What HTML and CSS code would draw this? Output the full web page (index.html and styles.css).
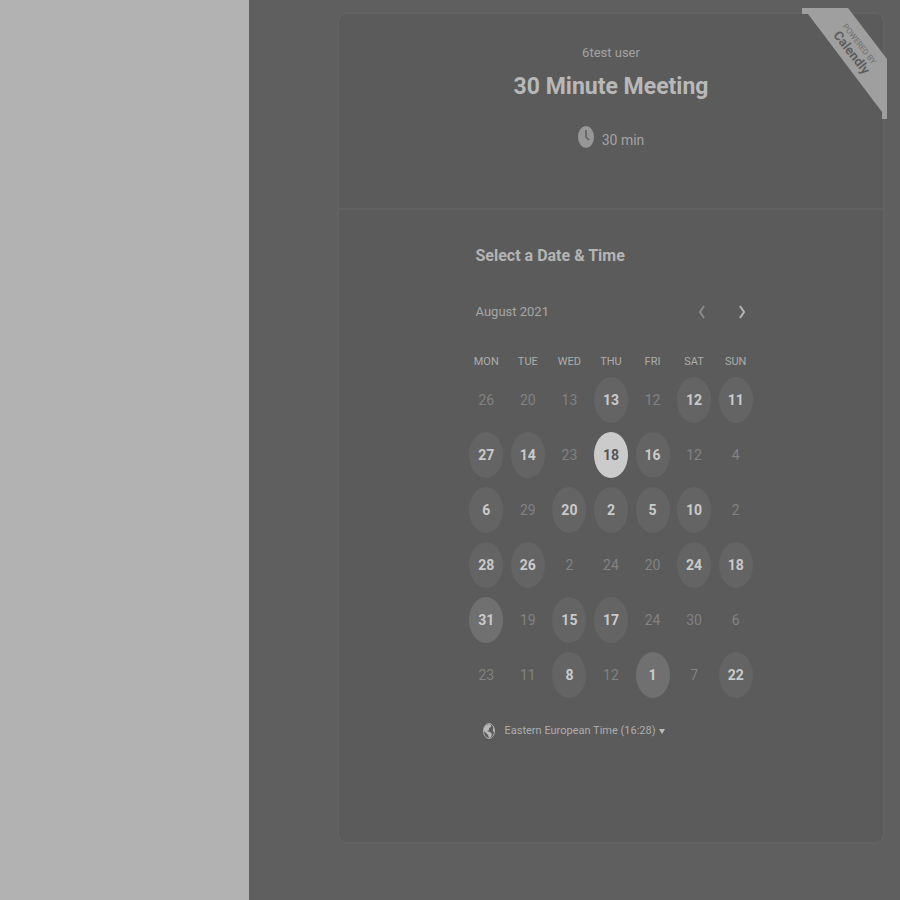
FILE: index.html
```
<!DOCTYPE html>
<html lang="en">
<head>
<meta charset="utf-8">
<title>30 Minute Meeting</title>
<link rel="stylesheet" href="styles.css">
</head>
<body>
<div class="page">
  <aside class="side"></aside>
  <main class="main">
    <section class="card">
      <a class="ribbon" href="#" aria-label="Powered by Calendly">
        <svg width="85" height="111" viewBox="0 0 85 111">
          <path class="ribbon-band" d="M0 0H46L85 51V111H80V104L6 6H0Z"/>
          <g transform="translate(57 35) rotate(52)">
            <text class="ribbon-small" x="1" y="3" text-anchor="middle">POWERED BY</text>
            <text class="ribbon-brand" x="3" y="16" text-anchor="middle">Calendly</text>
          </g>
        </svg>
      </a>
      <header class="intro">
        <p class="host">6test user</p>
        <h1 class="title">30 Minute Meeting</h1>
        <p class="duration">
          <svg width="16" height="22" viewBox="0 0 16 22"><ellipse cx="8" cy="11" rx="8" ry="11" fill="#979797"/><path d="M8 4V11L11 14" fill="none" stroke="#5b5b5b" stroke-width="1.5"/></svg>
          <span>30 min</span>
        </p>
      </header>
      <div class="picker">
        <h2 class="heading">Select a Date &amp; Time</h2>
        <div class="month">
          <span>August 2021</span>
          <div class="arrows">
            <button type="button" class="arrow" aria-label="Previous month"><svg width="8" height="14" viewBox="0 0 8 14"><path d="M6 1L2 7L6 13"/></svg></button>
            <button type="button" class="arrow next" aria-label="Next month"><svg width="8" height="14" viewBox="0 0 8 14"><path d="M2 1L6 7L2 13"/></svg></button>
          </div>
        </div>
        <table class="days">
          <thead><tr><th>MON</th><th>TUE</th><th>WED</th><th>THU</th><th>FRI</th><th>SAT</th><th>SUN</th></tr></thead>
          <tbody>
            <tr><td>26</td><td>20</td><td>13</td><td><button class="day">13</button></td><td>12</td><td><button class="day">12</button></td><td><button class="day">11</button></td></tr>
            <tr><td><button class="day">27</button></td><td><button class="day">14</button></td><td>23</td><td><button class="day selected">18</button></td><td><button class="day">16</button></td><td>12</td><td>4</td></tr>
            <tr><td><button class="day">6</button></td><td>29</td><td><button class="day">20</button></td><td><button class="day">2</button></td><td><button class="day">5</button></td><td><button class="day">10</button></td><td>2</td></tr>
            <tr><td><button class="day">28</button></td><td><button class="day">26</button></td><td>2</td><td>24</td><td>20</td><td><button class="day">24</button></td><td><button class="day">18</button></td></tr>
            <tr><td><button class="day strong">31</button></td><td>19</td><td><button class="day">15</button></td><td><button class="day">17</button></td><td>24</td><td>30</td><td>6</td></tr>
            <tr><td>23</td><td>11</td><td><button class="day">8</button></td><td>12</td><td><button class="day strong">1</button></td><td>7</td><td><button class="day">22</button></td></tr>
          </tbody>
        </table>
        <div class="zone">
          <svg width="12" height="16" viewBox="0 0 12 16"><ellipse cx="6" cy="8" rx="5.500" ry="7.500" fill="#5b5b5b" stroke="#b0b0b0" stroke-width="1"/><path d="M1 5Q2 2 6 1L8 2V4L6 5V7L4 8L7 9L9 11L8 14L6 15L5 12L3 10L1 8ZM10 4L11 6V9L10 8Z" fill="#b8b8b8"/></svg>
          <select class="zone-select" aria-label="Time zone"><option>Eastern European Time (16:28)</option></select>
          <svg class="caret" width="6" height="5" viewBox="0 0 6 5"><path d="M0 0H6L3 5Z" fill="#bdbdbd"/></svg>
        </div>
      </div>
    </section>
  </main>
</div>
</body>
</html>
```
FILE: styles.css
```
* { box-sizing: border-box; }
body {
  margin: 0;
  background: #5f5f5f;
  color: #b4b4b4;
  font-family: Roboto, sans-serif;
}
button, select { font: inherit; color: inherit; border: 0; padding: 0; background: none; }
h1, h2, p { margin: 0; }
svg { display: block; }
.page { display: flex; min-height: 100vh; }
.side { flex: 0 0 249px; background: #b2b2b2; }
.main { flex: 1; padding: 12px 15px 56px 88px; }
.card {
  position: relative;
  border: 2px solid #626262;
  border-radius: 10px;
  background: #5b5b5b;
}
.ribbon { position: absolute; top: -6px; right: -4px; }
.ribbon-band { fill: #9f9f9f; }
.ribbon-small { font-size: 8px; fill: #6c6c6c; }
.ribbon-brand { font-size: 13px; font-weight: 700; fill: #5e5e5e; }
.intro {
  display: flex;
  flex-direction: column;
  align-items: center;
  padding: 27px 0 54px;
  border-bottom: 2px solid #626262;
}
.host { font-size: 13px; line-height: 24px; color: #a3a3a3; }
.title { font-size: 23px; line-height: 44px; font-weight: 700; color: #b8b8b8; }
.duration {
  display: flex;
  gap: 8px;
  margin-top: 17px;
  font-size: 14px;
  line-height: 28px;
  color: #a3a3a3;
}
.picker { width: 291px; margin: 0 auto; padding: 32px 0 100px; }
.heading { padding-left: 10px; font-size: 16px; line-height: 28px; font-weight: 700; }
.month {
  display: flex;
  justify-content: space-between;
  align-items: center;
  margin-top: 28px;
  padding: 0 7px 0 10px;
  font-size: 13px;
  line-height: 28px;
  color: #a6a6a6;
}
.arrows { display: flex; gap: 24px; }
.arrow { display: flex; justify-content: center; width: 16px; }
.arrow path { fill: none; stroke: #8a8a8a; stroke-width: 2px; }
.next path { stroke: #b4b4b4; }
.days {
  width: 100%;
  margin-top: 24px;
  table-layout: fixed;
  border-collapse: collapse;
  text-align: center;
}
.days th { height: 22px; padding: 0; font-size: 11px; font-weight: 400; color: #adadad; }
.days td { height: 55px; padding: 0; font-size: 14px; color: #828282; }
.day {
  width: 34px;
  height: 46px;
  border-radius: 50%;
  background: #646464;
  color: #cacaca;
  font-weight: 700;
}
.strong { background: #707070; }
.selected { background: #cbcbcb; color: #555555; }
.zone { display: flex; align-items: center; margin-top: 18px; padding-left: 17px; }
.zone-select {
  appearance: none;
  margin: 0 2px 0 10px;
  font-size: 11px;
  line-height: 22px;
  color: #adadad;
}
```
